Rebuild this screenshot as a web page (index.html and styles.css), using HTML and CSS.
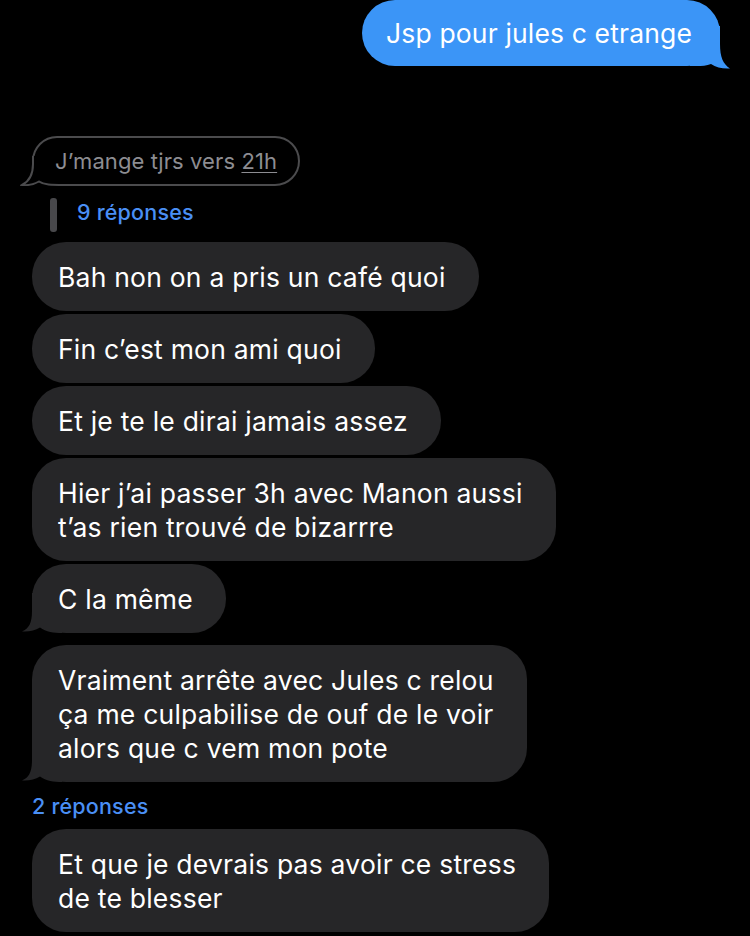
FILE: index.html
```html
<!DOCTYPE html>
<html lang="fr">
<head>
    <meta charset="UTF-8">
    <meta name="viewport" content="width=device-width, initial-scale=1.0">
    <title>Messages</title>
    <link rel="stylesheet" href="styles.css">
</head>
<body>
    <div class="thread">
        <div class="row-out">
            <div class="bubble-out">
                Jsp pour jules c etrange
                <svg class="tail-out" width="40" height="43" viewBox="0 0 40 43"><path d="M30 0 L30 18 C30 31 33 38 40 42.5 C33 43 26 41.5 21 38 C15 40.5 8 40 0 40 L0 0 Z" fill="#3b95f7"/></svg>
            </div>
        </div>

        <div class="quote">
            J’mange tjrs vers&nbsp;<u>21h</u>
            <svg class="tail-quote" width="44" height="30" viewBox="0 0 44 30"><rect x="0" y="0" width="44" height="30" fill="#000"/><path d="M13 0 L13 8 C13 19 9 25.5 2 29 C8 29.5 14 28.5 19 25.5 C24 29 31 29 44 29" fill="none" stroke="#4b4b4d" stroke-width="2"/></svg>
        </div>

        <div class="replies-row">
            <span class="reply-bar"></span>
            <span class="replies">9 réponses</span>
        </div>

        <div class="group">
            <div class="bubble">Bah non on a pris un café quoi</div>
            <div class="bubble">Fin c’est mon ami quoi</div>
            <div class="bubble">Et je te le dirai jamais assez</div>
            <div class="bubble">Hier j’ai passer 3h avec Manon aussi<br>t’as rien trouvé de bizarrre</div>
            <div class="bubble">C la même
                <svg class="tail-in" width="40" height="40" viewBox="0 0 40 40"><path d="M10 0 L10 18 C10 30 7 35.5 0 38.5 C7 39 13 37.5 18 34.5 C24 39 32 40 40 40 L40 0 Z" fill="#262628"/></svg>
            </div>
        </div>

        <div class="group group-gap">
            <div class="bubble">Vraiment arrête avec Jules c relou<br>ça me culpabilise de ouf de le voir<br>alors que c vem mon pote
                <svg class="tail-in" width="40" height="40" viewBox="0 0 40 40"><path d="M10 0 L10 18 C10 30 7 35.5 0 38.5 C7 39 13 37.5 18 34.5 C24 39 32 40 40 40 L40 0 Z" fill="#262628"/></svg>
            </div>
        </div>

        <div class="replies-plain">2 réponses</div>

        <div class="group">
            <div class="bubble">Et que je devrais pas avoir ce stress<br>de te blesser</div>
        </div>
    </div>
</body>
</html>
```

FILE: styles.css
```css
body {
    margin: 0;
    background: #000;
    font-family: Inter, "Noto Sans", sans-serif;
    color: #fff;
    height: 936px;
    overflow: hidden;
}
.thread {
    display: flex;
    flex-direction: column;
    align-items: flex-start;
    padding: 0 30px 0 32px;
}
.row-out {
    align-self: stretch;
    display: flex;
    justify-content: flex-end;
}
.bubble-out {
    position: relative;
    z-index: 0;
    background: #3b95f7;
    border-radius: 33px;
    padding: 16px 28px 16px 24px;
    font-size: 26.5px;
    line-height: 34px;
    letter-spacing: 0.15px;
}
.tail-out {
    position: absolute;
    z-index: -1;
    right: -10px;
    bottom: -3px;
}
.quote {
    position: relative;
    z-index: 0;
    margin-top: 70px;
    border: 2px solid #4b4b4d;
    border-radius: 25px;
    padding: 0 21px;
    height: 50px;
    box-sizing: border-box;
    display: flex;
    align-items: center;
    font-size: 22px;
    letter-spacing: 0.1px;
    color: #8d8d92;
}
.quote u {
    text-underline-offset: 3px;
    text-decoration-thickness: 1px;
}
.tail-quote {
    position: absolute;
    z-index: -1;
    left: -14px;
    bottom: -2px;
}
.replies-row {
    display: flex;
    align-items: center;
    gap: 20px;
    margin: 12px 0 0 18px;
}
.reply-bar {
    width: 7px;
    height: 34px;
    border-radius: 3px;
    background: #48484b;
}
.replies, .replies-plain {
    color: #4a8ff5;
    font-size: 21.5px;
    font-weight: 500;
    letter-spacing: 0.2px;
}
.replies {
    margin-top: -6px;
}
.replies-plain {
    margin: 11px 0 0;
    line-height: 26px;
}
.group {
    display: flex;
    flex-direction: column;
    align-items: flex-start;
    gap: 3px;
    margin-top: 10px;
}
.group-gap {
    margin-top: 12px;
}
.bubble {
    position: relative;
    z-index: 0;
    background: #262628;
    border-radius: 34px;
    padding: 17.5px 33px 17.5px 26px;
    font-size: 26.5px;
    line-height: 34px;
    letter-spacing: 0.22px;
}
.tail-in {
    position: absolute;
    z-index: -1;
    left: -10px;
    bottom: 0;
}
```
